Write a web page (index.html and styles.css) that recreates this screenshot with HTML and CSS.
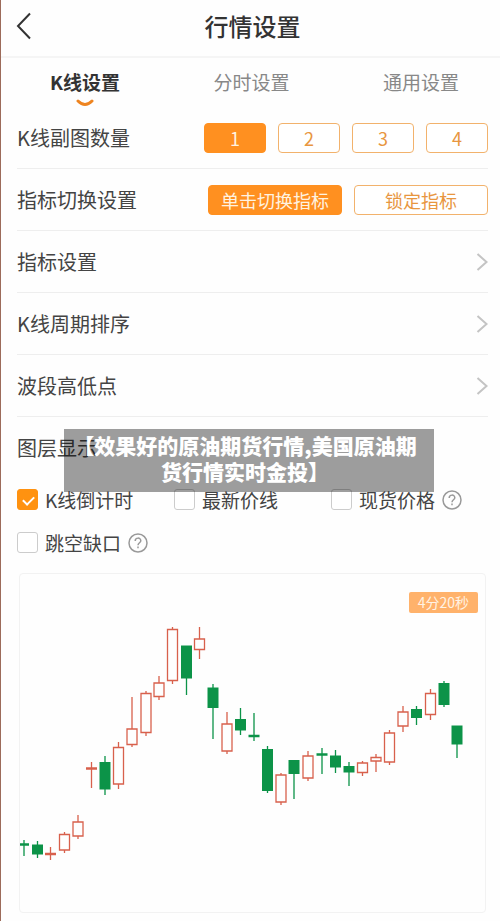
FILE: index.html
```html
<!DOCTYPE html>
<html lang="zh-CN">

<head>
    <meta charset="UTF-8">
    <meta name="viewport" content="width=device-width, initial-scale=1.0">
    <title>行情设置</title>
    <link rel="stylesheet" href="styles.css">
</head>

<body>
    <div class="page">
        <header class="header">
            <button type="button" class="back" aria-label="返回">
                <svg width="16" height="28" viewBox="0 0 16 28"><path d="M14 1.5 L2 14 L14 26.5"/></svg>
            </button>
            <h1>行情设置</h1>
        </header>

        <nav class="tabs">
            <a href="#" class="tab active">K线设置
                <svg class="smile" width="18" height="8" viewBox="0 0 18 8"><path d="M2 2 Q9 9 16 2"/></svg>
            </a>
            <a href="#" class="tab">分时设置</a>
            <a href="#" class="tab">通用设置</a>
        </nav>

        <main class="content">
            <div class="row">
                <span>K线副图数量</span>
                <div class="options">
                    <button type="button" class="num on">1</button>
                    <button type="button" class="num">2</button>
                    <button type="button" class="num">3</button>
                    <button type="button" class="num">4</button>
                </div>
            </div>
            <div class="row">
                <span>指标切换设置</span>
                <div class="options">
                    <button type="button" class="mode on">单击切换指标</button>
                    <button type="button" class="mode">锁定指标</button>
                </div>
            </div>
            <a href="#" class="row">
                <span>指标设置</span>
                <svg class="arrow" width="12" height="18" viewBox="0 0 12 18"><path d="M1.5 1 L10.5 9 L1.5 17"/></svg>
            </a>
            <a href="#" class="row">
                <span>K线周期排序</span>
                <svg class="arrow" width="12" height="18" viewBox="0 0 12 18"><path d="M1.5 1 L10.5 9 L1.5 17"/></svg>
            </a>
            <a href="#" class="row">
                <span>波段高低点</span>
                <svg class="arrow" width="12" height="18" viewBox="0 0 12 18"><path d="M1.5 1 L10.5 9 L1.5 17"/></svg>
            </a>

            <section class="layers">
                <h2>图层显示</h2>
                <div class="checks">
                    <div class="check">
                        <input type="checkbox" id="countdown" checked>
                        <label for="countdown">K线倒计时</label>
                    </div>
                    <div class="check">
                        <input type="checkbox" id="lastPrice">
                        <label for="lastPrice">最新价线</label>
                    </div>
                    <div class="check">
                        <input type="checkbox" id="spot">
                        <label for="spot">现货价格</label>
                        <svg class="help" width="20" height="20" viewBox="0 0 20 20"><circle cx="10" cy="10" r="9"/><path d="M7.2 8 C7.2 4.2 12.8 4.2 12.8 7.8 C12.8 9.8 10 9.8 10 12.2 M10 13.6 V15.2"/></svg>
                    </div>
                    <div class="check">
                        <input type="checkbox" id="gap">
                        <label for="gap">跳空缺口</label>
                        <svg class="help" width="20" height="20" viewBox="0 0 20 20"><circle cx="10" cy="10" r="9"/><path d="M7.2 8 C7.2 4.2 12.8 4.2 12.8 7.8 C12.8 9.8 10 9.8 10 12.2 M10 13.6 V15.2"/></svg>
                    </div>
                </div>
            </section>

            <div class="chart">
                <span class="timer">4分20秒</span>
                <svg viewBox="20 574 465 338">
                    <!-- 上漲 -->
                    <g class="up">
                        <path d="M50.5 847V860 M64.5 832V834 M64.5 850V853 M78 815V822 M78 836V839 M91.5 762V788 M118.5 742V748 M118.5 784V789 M132 697V729 M132 744V747 M146 691V694 M146 732V736 M159 676V683 M159 696V700 M172.5 627V630 M172.5 680V684 M199.5 627V639 M199.5 649V659 M227 712V724 M227 751V754 M281 773V775 M281 802V805 M308 751V756 M308 778V781 M362.5 761V763 M362.5 772V776 M376 754V757 M376 761V772 M389.5 730V733 M389.5 762V765 M403 706V712 M403 726V732 M430.5 689V693 M430.5 714V720"/>
                        <path d="M59.5 834.5h10v15.5h-10z M73 822h10v14h-10z M113.5 747.5h10v36.5h-10z M127 729h10v15.5h-10z M141 693.5h10v39h-10z M154 683h10v13.5h-10z M167.5 629.5h10v51h-10z M194.5 639h10v10.5h-10z M222 724h10v27h-10z M276 775h10v27h-10z M303 756h10v22h-10z M357.5 763h10v9.5h-10z M371 757.5h10v3.5h-10z M384.5 733h10v29h-10z M398 712h10v14h-10z M425.5 693.5h10v21h-10z"/>
                        <path class="flat" d="M45 854h11 M86 768.5h11"/>
                    </g>
                    <!-- 下跌 -->
                    <g class="down">
                        <path d="M24 840V856 M37.5 841V858 M105 756V795 M186.5 646V695 M213 684V739 M240.5 708V735 M254 713V741 M267.5 746V793 M294 760V799 M322 748V774 M335.5 750V773 M349 762V786 M416.5 706V725 M444 681V707 M457 726V758"/>
                        <path class="body" d="M32 844.5h11v10h-11z M99.5 762h11v27.5h-11z M181 645.5h11v33h-11z M207.5 687.5h11v20.5h-11z M235 719h11v11.5h-11z M262 749h11v42h-11z M288.5 760h11v14h-11z M330 755.5h11v12h-11z M343.5 766h11v6.5h-11z M411 709h11v9h-11z M438.5 683h11v22h-11z M451.5 725.5h11v19h-11z"/>
                        <path class="flat" d="M19 844.5h10 M248.5 736h11 M316.5 754.5h11"/>
                    </g>
                </svg>
            </div>
        </main>

        <div class="caption">【效果好的原油期货行情,美国原油期货行情实时金投】</div>
    </div>
</body>

</html>
```
FILE: styles.css
```css
* {
    box-sizing: border-box;
}

body {
    margin: 0;
    background-color: #fefefe;
    color: #444;
    font-family: "Noto Sans CJK SC", sans-serif;
    font-size: 20px;
}

a {
    color: inherit;
    text-decoration: none;
}

button {
    font-family: inherit;
    padding: 0;
    cursor: pointer;
}

svg {
    display: block;
    fill: none;
}

.page {
    position: relative;
    min-height: 100vh;
    border-left: 1px solid #9c6b5a;
}

/* 頂部標題 */
.header {
    display: grid;
    grid-template-columns: 48px 1fr 44px;
    align-items: center;
    height: 58px;
    padding-bottom: 4px;
    border-bottom: 2px solid #f5f5f5;
}

.back {
    padding-left: 15px;
    border: none;
    background: none;
}

.back svg {
    stroke: #333;
    stroke-width: 2;
}

.header h1 {
    margin: 0;
    text-align: center;
    color: #333;
    font-size: 24px;
    line-height: 36px;
    font-weight: 500;
}

/* 分頁 */
.tabs {
    display: flex;
    justify-content: space-between;
    height: 49px;
    padding: 10px 41px 0 49px;
}

.tab {
    color: #888;
    font-size: 19px;
    line-height: 28px;
}

.tab.active {
    color: #333;
    font-weight: 700;
}

.smile {
    margin: 3px auto 0;
    stroke: #ee8420;
    stroke-width: 3;
    stroke-linecap: round;
}

.content {
    padding: 0 12px 8px 16px;
}

.row {
    display: flex;
    justify-content: space-between;
    align-items: center;
    min-height: 62px;
    border-bottom: 1px solid #eee;
}

.options {
    display: flex;
    gap: 12px;
}

.num,
.mode {
    width: 62px;
    height: 30px;
    border: 1px solid #f2b26c;
    border-radius: 4px;
    background-color: #fff;
    color: #e8963f;
    font-size: 18px;
    line-height: 28px;
}

.mode {
    width: 134px;
}

.num.on,
.mode.on {
    border-color: #ff9020;
    background-color: #ff9020;
    color: #fff3e0;
}

.arrow {
    stroke: #c4c4c4;
    stroke-width: 2;
}

/* 圖層顯示 */
.layers h2 {
    margin: 0;
    font-size: 20px;
    line-height: 61px;
    font-weight: 400;
}

.checks {
    display: grid;
    grid-template-columns: repeat(3, 1fr);
    grid-auto-rows: 43px;
}

.check {
    display: flex;
    align-items: center;
    gap: 7px;
    font-size: 19px;
    white-space: nowrap;
}

.check input {
    appearance: none;
    position: relative;
    width: 21px;
    height: 21px;
    margin: 0;
    border: 1px solid #ccc;
    border-radius: 3px;
    background-color: #fff;
}

.check input:checked {
    border-color: #ff9210;
    background-color: #ff9210;
}

/* 勾號 */
.check input:checked::after {
    content: "";
    position: absolute;
    left: 7px;
    top: 4px;
    width: 5px;
    height: 9px;
    border: solid #fff;
    border-width: 0 2px 2px 0;
    transform: rotate(45deg);
}

.help {
    stroke: #999;
    stroke-width: 1.5;
}

/* K線圖 */
.chart {
    position: relative;
    margin: 9px 2px 0;
    border: 1px solid #f2f2f2;
    border-radius: 4px;
}

.chart svg {
    width: 100%;
}

.timer {
    position: absolute;
    top: 18px;
    right: 7px;
    padding: 0 9px;
    border-radius: 2px;
    background-color: #ffb26b;
    color: #fff3e4;
    font-size: 14px;
    line-height: 21px;
}

.up {
    stroke: #d8604c;
    stroke-width: 1.3;
}

.down {
    stroke: #0c9348;
    stroke-width: 1.3;
}

.down .body {
    fill: #0c9348;
    stroke: none;
}

.chart .flat {
    stroke-width: 2.5;
}

/* 浮在頁面上的標題 */
.caption {
    position: absolute;
    top: 429px;
    left: 63px;
    right: 66px;
    padding: 3px 16px 8px 8px;
    background-color: rgba(0, 0, 0, 0.38);
    color: #fff;
    font-size: 21px;
    line-height: 26px;
    font-weight: 900;
    text-align: center;
}
```
